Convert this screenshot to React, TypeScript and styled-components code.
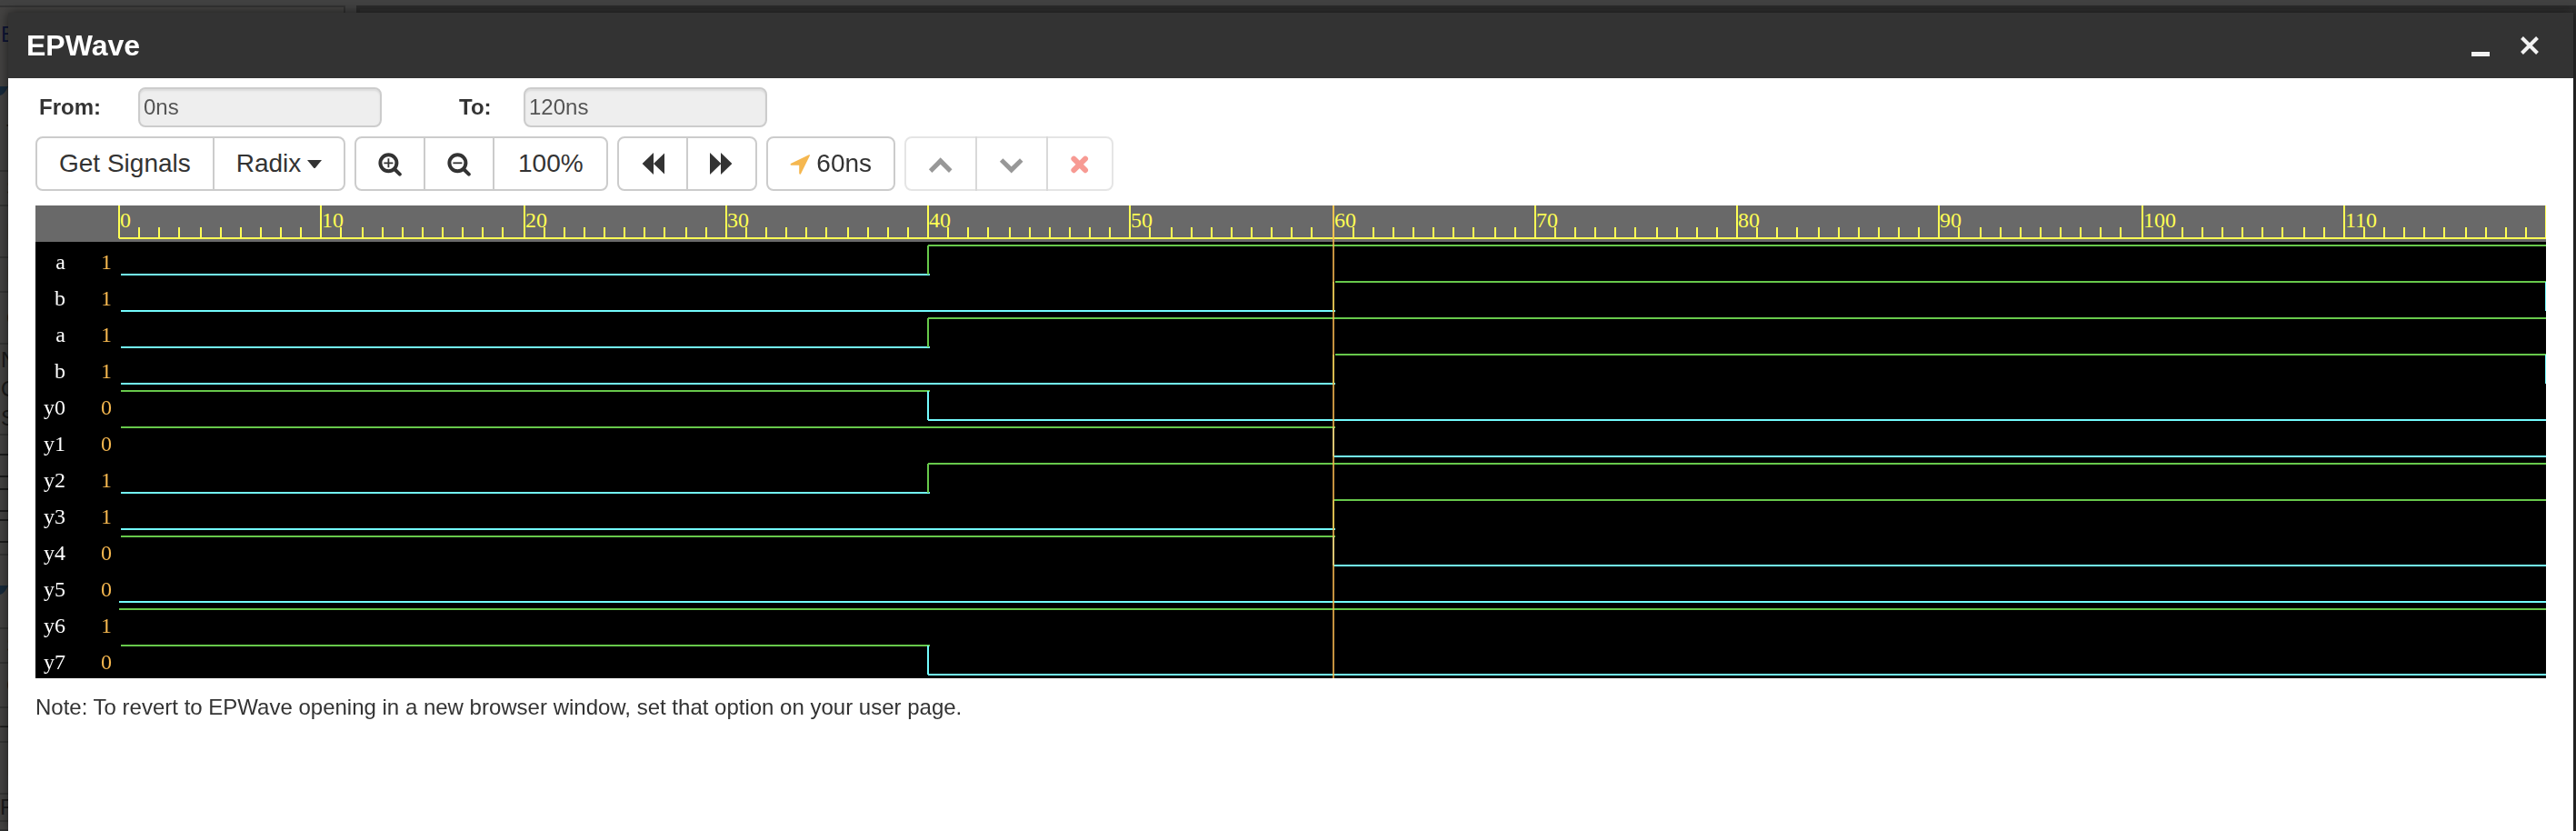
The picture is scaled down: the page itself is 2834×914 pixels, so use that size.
import React, { useLayoutEffect, useRef, useState } from 'react';
import styled, { createGlobalStyle } from 'styled-components';

const sans = '"Liberation Sans", Arial, sans-serif';
const serif = '"Liberation Serif", "Times New Roman", serif';

const GlobalStyle = createGlobalStyle`
  *, *::before, *::after { box-sizing: border-box; }
  body {
    margin: 0;
    background: #424242;
    color: #333;
    font-family: ${sans};
    font-size: 24px;
    line-height: 40px;
  }
`;

/* ---------- dimmed page behind the window ---------- */

const Backdrop = styled.div`
  position: fixed;
  inset: 0;
  overflow: hidden;
  display: flex;
  padding-top: 6px;
  background: #424242;
`;

const SidePanel = styled.div`
  flex: 0 0 380px;
  border: 2px solid #333;
  border-left: 0;
  background: #444342;
`;

const MainPanel = styled.div`
  flex: 1;
  margin-left: 12px;
  border: 4px solid #2c2c2c;
  background: #303030;
`;

const SideRow = styled.div<{ $height: number; $indent?: number; $line?: string }>`
  display: flex;
  align-items: center;
  height: ${(p) => p.$height}px;
  padding-left: ${(p) => p.$indent ?? 7}px;
  border-bottom: 2px solid ${(p) => p.$line ?? '#353534'};
  color: #1a1a1a;
  line-height: 32px;
`;

const SideLink = styled(SideRow)`
  border-bottom: 0;
  color: #0d1436;
`;

const SideFlag = styled.svg`
  display: block;
  width: 9px;
  height: 10px;
  fill: #17293a;
`;

/* ---------- window ---------- */

const Window = styled.main`
  position: relative;
  min-height: calc(100vh - 14px);
  margin: 14px 3px 0 9px;
  background: #fff;
  box-shadow: 0 0 12px rgba(0, 0, 0, 0.6);
`;

const TitleBar = styled.header`
  display: flex;
  align-items: center;
  height: 72px;
  padding: 0 34px 0 20px;
  background: #333;
  color: #fff;
`;

const Title = styled.h1`
  flex: 1;
  margin: 0;
  font-size: 32px;
  line-height: 40px;
`;

const WindowButton = styled.button`
  display: flex;
  width: 28px;
  height: 28px;
  margin-left: 26px;
  padding: 0;
  border: 0;
  background: none;
  color: #f2f2f2;
`;

const Content = styled.div`
  padding: 10px 30px 0;
`;

const RangeForm = styled.form`
  display: flex;
  align-items: center;
  padding-left: 4px;
`;

const RangeLabel = styled.label<{ $width: number }>`
  width: ${(p) => p.$width}px;
  font-weight: bold;
`;

const RangeInput = styled.input`
  width: 268px;
  height: 44px;
  padding: 0 4px;
  border: 2px solid #ccc;
  border-radius: 8px;
  background: #eee;
  box-shadow: inset 0 2px 2px rgba(0, 0, 0, 0.075);
  color: #555;
  font: 24px ${sans};

  & + label {
    margin-left: 85px;
  }
`;

const Toolbar = styled.div`
  display: flex;
  flex-wrap: wrap;
  gap: 10px;
  margin: 10px 0 16px;
`;

const ButtonGroup = styled.div`
  display: flex;
`;

const ToolButton = styled.button<{ $minWidth?: number }>`
  display: flex;
  align-items: center;
  justify-content: center;
  gap: 7px;
  height: 60px;
  min-width: ${(p) => p.$minWidth ?? 0}px;
  padding: 0 24px;
  border: 2px solid #ccc;
  background: #fff;
  color: #333;
  font: 28px ${sans};
  white-space: nowrap;

  & + & {
    margin-left: -2px;
  }
  &:first-child {
    border-top-left-radius: 8px;
    border-bottom-left-radius: 8px;
  }
  &:last-child {
    border-top-right-radius: 8px;
    border-bottom-right-radius: 8px;
  }
  &:disabled {
    background: transparent;
    opacity: 0.5;
  }
`;

const Note = styled.p`
  margin: 12px 0 0;
`;

/* ---------- icons ---------- */

const Glyph = ({ width, children }: { width: number; children: React.ReactNode }) => (
  <svg width={width} height={28} viewBox={`0 0 ${width} 28`} fill="currentColor" aria-hidden="true">
    {children}
  </svg>
);

const ZoomGlyph = ({ plus }: { plus?: boolean }) => (
  <Glyph width={26}>
    <g fill="none" stroke="currentColor">
      <circle cx="11.4" cy="13.3" r="9" strokeWidth="4" />
      <path d="M18 20 L23.8 25.6" strokeWidth="4" strokeLinecap="round" />
      <path d={plus ? 'M6.4 13.3 H16.4 M11.4 8.3 V18.3' : 'M6.4 13.3 H16.4'} strokeWidth="1.8" />
    </g>
  </Glyph>
);

/* ---------- waveform viewer ---------- */

const END_TIME = 120;
const ROW = 40;

type Signal = { name: string; value: number; start: 0 | 1; changes: number[] };

const signals: Signal[] = [
  { name: 'a', value: 1, start: 0, changes: [40] },
  { name: 'b', value: 1, start: 0, changes: [60, 120] },
  { name: 'a', value: 1, start: 0, changes: [40] },
  { name: 'b', value: 1, start: 0, changes: [60, 120] },
  { name: 'y0', value: 0, start: 1, changes: [40] },
  { name: 'y1', value: 0, start: 1, changes: [60] },
  { name: 'y2', value: 1, start: 0, changes: [40] },
  { name: 'y3', value: 1, start: 0, changes: [60] },
  { name: 'y4', value: 0, start: 1, changes: [60] },
  { name: 'y5', value: 0, start: 0, changes: [] },
  { name: 'y6', value: 1, start: 1, changes: [] },
  { name: 'y7', value: 0, start: 1, changes: [40] },
];

const Viewer = styled.section`
  display: flex;
  background: #000;
  font-family: ${serif};
  font-size: 24px;
`;

const Gutter = styled.ul`
  flex: 0 0 91px;
  margin: 0;
  padding: 0;
  border-top: 40px solid #696969;
  list-style: none;
`;

const SignalRow = styled.li`
  display: grid;
  grid-template-columns: 33px 1fr;
  height: ${ROW}px;
  padding: 2px 7px 0 0;
  color: #fff;
  text-align: right;
`;

const SignalName = styled.span`
  white-space: nowrap;
`;

const SignalValue = styled.span`
  color: #f5b74f;
`;

const Plot = styled.div`
  flex: 1;
  min-width: 0;
`;

const PlotSvg = styled.svg`
  display: block;
  width: 100%;
`;

const Waveform = () => {
  const ref = useRef<HTMLDivElement>(null);
  const [width, setWidth] = useState(0);

  useLayoutEffect(() => {
    const node = ref.current;
    if (!node) return;
    const measure = () => setWidth(node.clientWidth);
    measure();
    const observer = new ResizeObserver(measure);
    observer.observe(node);
    return () => observer.disconnect();
  }, []);

  const height = ROW * (signals.length + 1);
  const x = (time: number) => 1 + 2 * Math.round(((width - 1) * time) / END_TIME / 2);
  const ticks = Array.from({ length: END_TIME + 1 }, (_, i) => i);

  return (
    <Viewer aria-label="Waveform">
      <Gutter>
        {signals.map((s, i) => (
          <SignalRow key={i}>
            <SignalName>{s.name}</SignalName>
            <SignalValue>{s.value}</SignalValue>
          </SignalRow>
        ))}
      </Gutter>
      <Plot ref={ref}>
        <PlotSvg height={height}>
          <rect width="100%" height={ROW} fill="#696969" />
          <g stroke="#ffff54" strokeWidth="2">
            <path d={`M1 36 H${width}`} />
            {ticks.map((t) => (
              <path key={t} d={`M${x(t)} ${t % 10 ? 24 : 0} V36`} />
            ))}
          </g>
          <g fill="#ffff54">
            {ticks
              .filter((t) => t % 10 === 0 && t < END_TIME)
              .map((t) => (
                <text key={t} x={x(t) + 1} y="24">
                  {t}
                </text>
              ))}
          </g>
          {signals.map((s, i) => {
            const points = [0, ...s.changes];
            return (
              <g key={i} strokeWidth="2">
                {points.map((t, n) => {
                  const high = (s.start + n) % 2 === 1;
                  const top = ROW * (i + 1) + 4;
                  const y = high ? top : top + 32;
                  const last = n === points.length - 1;
                  const from = last ? x(t) : x(t) + 2;
                  const to = last ? width : x(points[n + 1]) + 2;
                  return (
                    <g key={t} stroke={high ? '#67c84b' : '#73fbfd'}>
                      <path d={`M${from} ${y} H${to}`} />
                      {n > 0 && <path d={`M${x(t)} ${top} V${top + 32}`} />}
                    </g>
                  );
                })}
              </g>
            );
          })}
          <path d={`M${x(60)} 0 V${height}`} stroke="#f5b74f" strokeOpacity="0.8" strokeWidth="2" />
        </PlotSvg>
      </Plot>
    </Viewer>
  );
};

/* ---------- page ---------- */

const App = () => (
  <>
    <GlobalStyle />
    <Backdrop aria-hidden="true">
      <SidePanel>
        <SideLink $height={60} $indent={1}>E</SideLink>
        <SideRow $height={27} $line="transparent" />
        <SideFlag viewBox="0 0 9 10"><path d="M0 0 H9 Q5 9 0 10 Z" /></SideFlag>
        <SideRow $height={84}>T</SideRow>
        <SideRow $height={38}>S</SideRow>
        <SideRow $height={57}>I</SideRow>
        <SideRow $height={38}>I</SideRow>
        <SideRow $height={57}>C</SideRow>
        <SideRow $height={100} $indent={1}>
          N<br />O<br />S
        </SideRow>
        <SideRow $height={22} $line="#1c1c1c" />
        <SideRow $height={24} $line="#1c1c1c" />
        <SideRow $height={14} $line="#1c1c1c" />
        <SideRow $height={24} $line="#1c1c1c" />
        <SideRow $height={10} $line="#1c1c1c" />
        <SideRow $height={24} $line="#1c1c1c" />
        <SideRow $height={14} />
        <SideRow $height={33} $line="transparent" />
        <SideFlag viewBox="0 0 9 10"><path d="M0 0 H9 Q5 9 0 10 Z" /></SideFlag>
        <SideRow $height={38} />
        <SideRow $height={38}>S</SideRow>
        <SideRow $height={49}>C</SideRow>
        <SideRow $height={38} $indent={0}>–</SideRow>
        <SideRow $height={57}>I</SideRow>
        <SideRow $height={30} $indent={0}>F</SideRow>
      </SidePanel>
      <MainPanel />
    </Backdrop>
    <Window>
      <TitleBar>
        <Title>EPWave</Title>
        <WindowButton type="button" aria-label="Minimize">
          <Glyph width={28}>
            <rect x="4" y="21" width="20" height="5" />
          </Glyph>
        </WindowButton>
        <WindowButton type="button" aria-label="Close">
          <Glyph width={28}>
            <path d="M5.5 5.5 L22.5 22.5 M22.5 5.5 L5.5 22.5" stroke="currentColor" strokeWidth="4" />
          </Glyph>
        </WindowButton>
      </TitleBar>
      <Content>
        <RangeForm>
          <RangeLabel htmlFor="from" $width={109}>From:</RangeLabel>
          <RangeInput id="from" type="text" readOnly value="0ns" />
          <RangeLabel htmlFor="to" $width={71}>To:</RangeLabel>
          <RangeInput id="to" type="text" readOnly value="120ns" />
        </RangeForm>
        <Toolbar>
          <ButtonGroup>
            <ToolButton type="button">Get Signals</ToolButton>
            <ToolButton type="button">
              Radix
              <Glyph width={16}>
                <path d="M0 10 H16 L9 18.5 Q8 19.5 7 18.5 Z" />
              </Glyph>
            </ToolButton>
          </ButtonGroup>
          <ButtonGroup>
            <ToolButton type="button" aria-label="Zoom in"><ZoomGlyph plus /></ToolButton>
            <ToolButton type="button" aria-label="Zoom out"><ZoomGlyph /></ToolButton>
            <ToolButton type="button" $minWidth={127}>100%</ToolButton>
          </ButtonGroup>
          <ButtonGroup>
            <ToolButton type="button" aria-label="Previous edge">
              <Glyph width={26}>
                <path d="M14 2 V26 L1.6 14 Z M26.6 2 V26 L14 14 Z" />
              </Glyph>
            </ToolButton>
            <ToolButton type="button" aria-label="Next edge">
              <Glyph width={26}>
                <path d="M0 2 V26 L12.4 14 Z M12 2 V26 L24.4 14 Z" />
              </Glyph>
            </ToolButton>
          </ButtonGroup>
          <ButtonGroup>
            <ToolButton type="button">
              <Glyph width={22}>
                <path
                  d="M21.5 4 L0.8 14 Q0 15.5 1.5 15.8 H10.2 V24.5 Q10.8 26.5 12 25.2 L22 5 Z"
                  fill="#f5b74f"
                />
              </Glyph>
              60ns
            </ToolButton>
          </ButtonGroup>
          <ButtonGroup>
            <ToolButton type="button" disabled aria-label="Move up">
              <Glyph width={28}>
                <path d="M13.7 7.3 L26.5 20.3 L23 24 L13.7 14.8 L4.4 24 L0.9 20.3 Z" />
              </Glyph>
            </ToolButton>
            <ToolButton type="button" disabled aria-label="Move down">
              <Glyph width={28}>
                <path d="M13.7 24.6 L26.5 11.8 L23 8.2 L13.7 17.2 L4.4 8.2 L0.9 11.8 Z" />
              </Glyph>
            </ToolButton>
            <ToolButton type="button" disabled aria-label="Remove">
              <Glyph width={22}>
                <path
                  d="M4.4 8.6 L17 21.2 M17 8.6 L4.4 21.2"
                  stroke="#ef3729"
                  strokeWidth="6"
                  strokeLinecap="round"
                />
              </Glyph>
            </ToolButton>
          </ButtonGroup>
        </Toolbar>
        <Waveform />
        <Note>Note: To revert to EPWave opening in a new browser window, set that option on your user page.</Note>
      </Content>
    </Window>
  </>
);

export default App;
